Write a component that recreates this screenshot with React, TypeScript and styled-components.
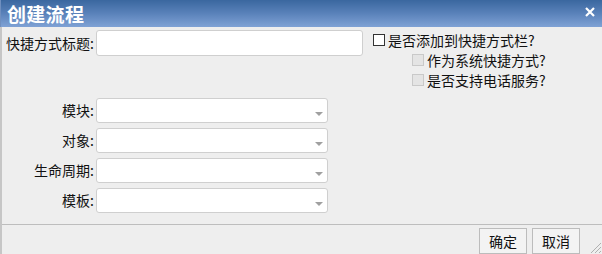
import React from "react";
import styled, { createGlobalStyle } from "styled-components";

const GlobalStyle = createGlobalStyle`
  html, body { margin: 0; padding: 0; background: #eeeeee; }
  body { font-family: "Noto Sans CJK SC", "Noto Sans", sans-serif; }
  * { box-sizing: border-box; }
`;

const Dialog = styled.div`
  width: 602px;
  height: 254px;
  display: flex;
  flex-direction: column;
  background: #eeeeee;
  overflow: hidden;
`;

const TitleBar = styled.div`
  height: 27px;
  flex: none;
  display: flex;
  align-items: center;
  justify-content: space-between;
  padding: 0 7px 0 6px;
  background: linear-gradient(to bottom, #3a679f 0%, #5a82ba 50%, #7fa2d5 100%);
  border-left: 1px solid #6f8fbf;
`;

const Title = styled.div`
  color: #ffffff;
  font-size: 19px;
  font-weight: bold;
  line-height: 27px;
  letter-spacing: 0.3px;
`;

const Close = styled.svg`
  width: 10px;
  height: 10px;
  margin-top: -4px;
`;

const Body = styled.div`
  flex: 1;
  display: flex;
  flex-direction: column;
  border-left: 2px solid #c6c6c6;
`;

const Main = styled.div`
  flex: 1;
  padding-top: 3px;
  display: flex;
  flex-direction: column;
`;

const TopRow = styled.div`
  display: flex;
  align-items: flex-start;
  height: 64px;
`;

const Label = styled.label`
  width: 92px;
  margin-right: 2px;
  text-align: right;
  font-size: 14px;
  color: #111;
  white-space: nowrap;
  line-height: ${(p: { $h: number }) => p.$h}px;
`;

const TextInput = styled.div`
  width: 267px;
  height: 26px;
  background: #fff;
  border: 1px solid #cfcfcf;
  border-radius: 3px;
`;

const Checks = styled.div`
  margin-left: 10px;
  display: flex;
  flex-direction: column;
`;

const CheckLine = styled.div<{ $indent: number }>`
  height: 20px;
  display: flex;
  align-items: center;
  padding-left: ${(p) => p.$indent}px;
  font-size: 14px;
  color: #111;
  white-space: nowrap;
`;

const Box = styled.span<{ $disabled?: boolean }>`
  width: 12px;
  height: 12px;
  margin-right: 3px;
  border: 1px solid ${(p) => (p.$disabled ? "#c9c9c9" : "#333")};
  background: ${(p) => (p.$disabled ? "#e4e4e4" : "#fff")};
  flex: none;
`;

const SelectList = styled.div`
  margin-top: 4px;
  display: flex;
  flex-direction: column;
  gap: 5px;
`;

const SelectRow = styled.div`
  display: flex;
  align-items: center;
  height: 25px;
`;

const Select = styled.div`
  width: 232px;
  height: 25px;
  background: #fff;
  border: 1px solid #cfcfcf;
  border-radius: 3px;
  display: flex;
  align-items: center;
  justify-content: flex-end;
  padding-right: 4px;
`;

const Arrow = styled.span`
  width: 0;
  height: 0;
  margin-top: 6px;
  border-left: 4px solid transparent;
  border-right: 4px solid transparent;
  border-top: 4px solid #a0a0a0;
`;

const Footer = styled.div`
  height: 30px;
  flex: none;
  border-top: 1px solid #bdbdbd;
  display: flex;
  justify-content: flex-end;
  align-items: flex-start;
  padding: 3px 22px 0 0;
  gap: 5px;
  position: relative;
`;

const Button = styled.button`
  height: 26px;
  padding: 0 9px;
  border: 1px solid #bcbcbc;
  background: #f3f3f3;
  font-family: "Noto Sans CJK SC", sans-serif;
  font-size: 14px;
  color: #111;
  line-height: 22px;
`;

const Grip = styled.svg`
  position: absolute;
  right: 0;
  bottom: 0;
  width: 14px;
  height: 14px;
`;

const selects = ["模块:", "对象:", "生命周期:", "模板:"];

export default function App() {
  return (
    <>
      <GlobalStyle />
      <Dialog>
        <TitleBar>
          <Title>创建流程</Title>
          <Close viewBox="0 0 10 10">
            <path d="M1 1 L9 9 M9 1 L1 9" stroke="#fff" strokeWidth="2.2" />
          </Close>
        </TitleBar>
        <Body>
          <Main>
            <TopRow>
              <Label $h={26}>快捷方式标题:</Label>
              <TextInput />
              <Checks>
                <CheckLine $indent={0}>
                  <Box />
                  是否添加到快捷方式栏?
                </CheckLine>
                <CheckLine $indent={39}>
                  <Box $disabled />
                  作为系统快捷方式?
                </CheckLine>
                <CheckLine $indent={39}>
                  <Box $disabled />
                  是否支持电话服务?
                </CheckLine>
              </Checks>
            </TopRow>
            <SelectList>
              {selects.map((s) => (
                <SelectRow key={s}>
                  <Label $h={25}>{s}</Label>
                  <Select>
                    <Arrow />
                  </Select>
                </SelectRow>
              ))}
            </SelectList>
          </Main>
          <Footer>
            <Button>确定</Button>
            <Button>取消</Button>
            <Grip viewBox="0 0 14 14">
              <path d="M13 3 L3 13 M13 7 L7 13 M13 11 L11 13" stroke="#b0b0b0" strokeWidth="1" />
            </Grip>
          </Footer>
        </Body>
      </Dialog>
    </>
  );
}
